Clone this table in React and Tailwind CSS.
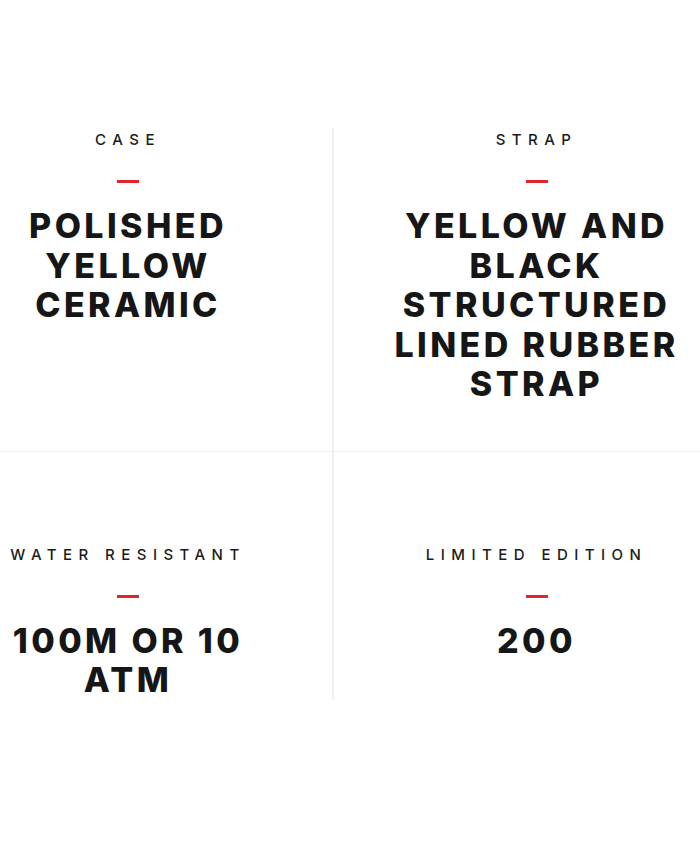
const SPECS = [
  { label: "CASE", value: "POLISHED YELLOW CERAMIC" },
  { label: "STRAP", value: "YELLOW AND BLACK STRUCTURED LINED RUBBER STRAP" },
  { label: "WATER RESISTANT", value: "100M OR 10 ATM" },
  { label: "LIMITED EDITION", value: "200" },
];

function Spec({ label, value }) {
  return (
    <div className="flex flex-col items-center text-center">
      <div className="text-[15px] leading-[16px] font-medium tracking-[0.43em] text-[#1b1b1b]">{label}</div>
      <div className="mt-[32px] h-[3px] w-[22px] bg-[#e0262b]" />
      <div className="mt-[23px] text-[34px] leading-[39.5px] font-extrabold tracking-[0.1em] text-[#161616]">
        {value}
      </div>
    </div>
  );
}

export default function App() {
  return (
    <div className="w-[700px] h-[850px] bg-white" style={{ fontFamily: "Inter, 'Liberation Sans', sans-serif" }}>
      <div className="pt-[128px] grid grid-cols-[334px_366px]">
        {/* top row */}
        <div className="border-r-2 border-b border-[#efefef] pt-[4px] pr-[76px] pb-[47px]">
          <Spec {...SPECS[0]} />
        </div>
        <div className="border-b border-[#efefef] pt-[4px] pl-[39px] pb-[47px]">
          <Spec {...SPECS[1]} />
        </div>
        {/* bottom row */}
        <div className="border-r-2 border-[#efefef] pt-[95px] pr-[76px]">
          <Spec {...SPECS[2]} />
        </div>
        <div className="pt-[95px] pl-[39px]">
          <Spec {...SPECS[3]} />
        </div>
      </div>
    </div>
  );
}
